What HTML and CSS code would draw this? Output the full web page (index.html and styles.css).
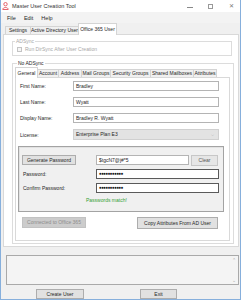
FILE: index.html
```html
<!DOCTYPE html>
<html lang="en">
<head>
    <meta charset="UTF-8">
    <title>Master User Creation Tool</title>
    <link rel="stylesheet" href="styles.css">
</head>
<body>
    <div class="window">
        <div class="titlebar">
            <svg class="app-icon" viewBox="0 0 7 8" width="7" height="8">
                <circle cx="3.5" cy="2.2" r="1.7" fill="none" stroke="#e2525c" stroke-width="0.9"/>
                <path d="M0.8 7.5 C0.8 4.8 6.2 4.8 6.2 7.5 Z" fill="none" stroke="#e2525c" stroke-width="0.9"/>
            </svg>
            <span class="title">Master User Creation Tool</span>
            <div class="controls">
                <span class="ctl ctl-min"></span>
                <span class="ctl ctl-max"></span>
                <span class="ctl ctl-close">&#x2715;</span>
            </div>
        </div>
        <div class="menubar">
            <span>File</span>
            <span>Edit</span>
            <span>Help</span>
        </div>
        <div class="tabs">
            <div class="tabstrip">
                <span class="tab" style="width:26px">Settings</span>
                <span class="tab" style="width:49px">Active Directory User</span>
                <span class="tab active" style="width:39px">Office 365 User</span>
            </div>
            <div class="tabpage">
                <fieldset class="group group-adsync">
                    <legend>ADSync</legend>
                    <label class="check"><span class="box"></span>Run DirSync After User Creation</label>
                </fieldset>
                <fieldset class="group group-main">
                    <legend>No ADSync</legend>
                    <div class="subtabs">
                        <div class="tabstrip small">
                            <span class="tab active" style="width:23px">General</span>
                            <span class="tab" style="width:22px">Account</span>
                            <span class="tab" style="width:24px">Address</span>
                            <span class="tab" style="width:30px">Mail Groups</span>
                            <span class="tab" style="width:41px">Security Groups</span>
                            <span class="tab" style="width:44px">Shared Mailboxes</span>
                            <span class="tab" style="width:24px">Attributes</span>
                        </div>
                        <div class="subpage">
                            <div class="row">
                                <span class="label">First Name:</span>
                                <span class="field">Bradley</span>
                            </div>
                            <div class="row">
                                <span class="label">Last Name:</span>
                                <span class="field">Wyatt</span>
                            </div>
                            <div class="row">
                                <span class="label">Display Name:</span>
                                <span class="field">Bradley R. Wyatt</span>
                            </div>
                            <div class="row">
                                <span class="label">License:</span>
                                <span class="field combo">Enterprise Plan E3<span class="arrow">&#x2335;</span></span>
                            </div>
                            <div class="panel">
                                <div class="prow">
                                    <span class="btn btn-gen">Generate Password</span>
                                    <span class="field gen">$tgcN7@j#*5</span>
                                    <span class="btn btn-clear">Clear</span>
                                </div>
                                <div class="prow">
                                    <span class="plabel">Password:</span>
                                    <span class="field pass">&#x25CF;&#x25CF;&#x25CF;&#x25CF;&#x25CF;&#x25CF;&#x25CF;&#x25CF;&#x25CF;&#x25CF;&#x25CF;</span>
                                </div>
                                <div class="prow">
                                    <span class="plabel">Confirm Password:</span>
                                    <span class="field pass">&#x25CF;&#x25CF;&#x25CF;&#x25CF;&#x25CF;&#x25CF;&#x25CF;&#x25CF;&#x25CF;&#x25CF;&#x25CF;</span>
                                </div>
                                <div class="match">Passwords match!</div>
                            </div>
                            <div class="actions">
                                <span class="btn disabled btn-o365">Connected to Office 365</span>
                                <span class="btn btn-copy">Copy Attributes From AD User</span>
                            </div>
                        </div>
                    </div>
                </fieldset>
            </div>
        </div>
        <div class="log">
            <span class="scroll up">&#x2303;</span>
            <span class="scroll down">&#x2304;</span>
        </div>
        <div class="footer">
            <span class="btn btn-create">Create User</span>
            <span class="btn btn-exit">Exit</span>
        </div>
    </div>
</body>
</html>
```

FILE: styles.css
```css
* {
    box-sizing: border-box;
}
body {
    margin: 0;
    font-family: "Liberation Sans", Arial, sans-serif;
    font-size: 5px;
    color: #262626;
    background: #fff;
}
.window {
    width: 241px;
    height: 300px;
    border: 1px solid #86afdc;
    border-top: none;
    background: #f0f0f0;
    display: flex;
    flex-direction: column;
}
.titlebar {
    height: 12px;
    background: #fff;
    display: flex;
    align-items: center;
    padding-left: 1px;
}
.title {
    margin-left: 3px;
    font-size: 5.5px;
    color: #333;
}
.controls {
    margin-left: auto;
    display: flex;
    align-items: center;
    gap: 15px;
    padding-right: 6px;
}
.ctl {
    display: block;
    width: 6px;
    height: 6px;
    color: #777;
    font-size: 6px;
    line-height: 6px;
    text-align: center;
}
.ctl-min {
    border-bottom: 1px solid #888;
    height: 4px;
    margin-bottom: 1px;
}
.ctl-max {
    border: 1px solid #999;
    width: 5px;
    height: 5px;
}
.menubar {
    height: 11px;
    display: flex;
    align-items: center;
    gap: 8px;
    padding-left: 6px;
    background: #f3f3f3;
    font-size: 5.5px;
}
.tabs {
    padding: 0 1px 0 2px;
}
.tabstrip {
    display: flex;
    height: 11px;
    padding-left: 2px;
    align-items: flex-end;
}
.tab {
    height: 8px;
    line-height: 7px;
    text-align: center;
    white-space: nowrap;
    background: #f0f0f0;
    border: 1px solid #d4d4d4;
    border-bottom: none;
    margin-right: -1px;
    overflow: hidden;
}
.tab.active {
    line-height: 10px;
    background: #fff;
    position: relative;
    z-index: 1;
    margin-bottom: -1px;
    height: 12px;
}
.tabpage {
    height: 213px;
    background: #fff;
    border: 1px solid #d9d9d9;
    padding: 3px 0 0 8px;
}
.group {
    margin: 0;
    border: 1px solid #dcdcdc;
    padding: 0;
}
.group legend {
    padding: 0 1px;
    margin-left: 2px;
    line-height: 6px;
}
.group-adsync {
    width: 220px;
    height: 18px;
    color: #a8a8a8;
}
.check {
    display: flex;
    align-items: center;
    gap: 3px;
    padding: 2px 0 0 4px;
}
.box {
    width: 5px;
    height: 5px;
    border: 1px solid #c4c4c4;
    background: #f6f6f6;
}
.group-main {
    width: 222px;
    height: 184px;
    margin-top: 4px;
    padding: 1px 0 0 2px;
}
.subtabs {
    width: 215px;
}
.tabstrip.small {
    height: 10px;
    padding-left: 0;
}
.tabstrip.small .tab {
    height: 8px;
    line-height: 7px;
}
.tabstrip.small .tab.active {
    height: 11px;
    line-height: 10px;
}
.subpage {
    height: 164px;
    background: #fff;
    border: 1px solid #d9d9d9;
    padding: 3px 0 0 4px;
}
.row {
    display: flex;
    align-items: center;
    margin-bottom: 6px;
}
.label {
    width: 53px;
}
.field {
    display: block;
    width: 146px;
    height: 10px;
    line-height: 8px;
    padding: 0 2px;
    border: 1px solid #b4b4b4;
    background: #fff;
    white-space: nowrap;
    overflow: hidden;
}
.combo {
    height: 11px;
    line-height: 9px;
    background: #e3e3e3;
    border-color: #d0d0d0;
    display: flex;
}
.arrow {
    margin-left: auto;
    margin-right: 2px;
    color: #888;
    font-size: 4px;
}
.panel {
    width: 206px;
    height: 66px;
    margin: 2px 0 0 -2px;
    background: #f0f0f0;
    border: 1px solid #a3a3a3;
    box-shadow: inset 1px 1px 0 #e2e2e2;
    padding: 8px 0 0 3px;
}
.prow {
    display: flex;
    align-items: center;
    height: 10px;
    margin-bottom: 4px;
}
.plabel {
    width: 74px;
    padding-left: 1px;
}
.btn {
    display: block;
    height: 10px;
    line-height: 8px;
    text-align: center;
    white-space: nowrap;
    background: #e1e1e1;
    border: 1px solid #adadad;
}
.btn-gen {
    width: 54px;
    margin-right: 20px;
}
.field.gen {
    width: 93px;
}
.btn-clear {
    width: 27px;
    margin-left: 2px;
    height: 11px;
    background: #e6e6e6;
    border-color: #c7c7c7;
    color: #555;
}
.field.pass {
    width: 123px;
    border-color: #5a5a5a;
    font-size: 4.6px;
    letter-spacing: -0.6px;
    line-height: 8px;
    color: #111;
}
.match {
    margin: 3px 0 0 64px;
    color: #34a034;
}
.actions {
    display: flex;
    justify-content: space-between;
    padding: 0 11px 0 2px;
    margin-top: 5px;
}
.btn-o365 {
    width: 64px;
    height: 11px;
    line-height: 9px;
}
.btn.disabled {
    background: #cccccc;
    border-color: #c2c2c2;
    color: #8c8c8c;
}
.btn-copy {
    width: 81px;
    height: 12px;
    line-height: 10px;
}
.log {
    position: relative;
    height: 30px;
    margin: 8px 1px 0 5px;
    background: #f4f4f4;
    border: 1px solid #a9a9a9;
}
.scroll {
    position: absolute;
    right: 2px;
    color: #aaa;
    font-size: 5px;
    line-height: 5px;
}
.scroll.up {
    top: 2px;
}
.scroll.down {
    bottom: 1px;
}
.footer {
    display: flex;
    margin-top: 4px;
    padding-left: 35px;
}
.btn-create {
    width: 48px;
    margin-right: 56px;
}
.btn-exit {
    width: 37px;
}
```
